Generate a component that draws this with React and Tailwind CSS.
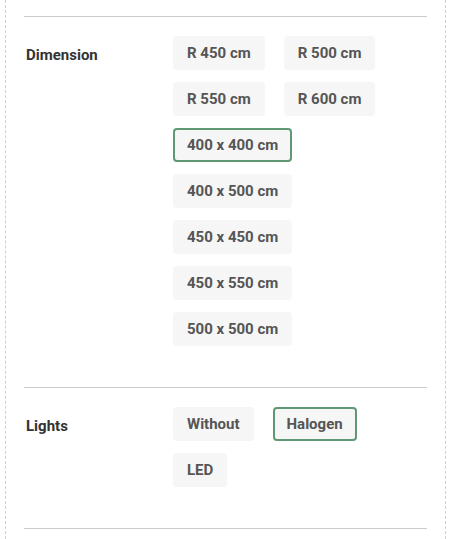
const dimensions = [
  ["R 450 cm", "R 500 cm"],
  ["R 550 cm", "R 600 cm"],
  ["400 x 400 cm"],
  ["400 x 500 cm"],
  ["450 x 450 cm"],
  ["450 x 550 cm"],
  ["500 x 500 cm"],
];

const lights = [["Without", "Halogen"], ["LED"]];

function Option({ label, selected }) {
  return (
    <button
      type="button"
      className={
        "h-[34px] rounded-[4px] bg-[#f6f6f6] text-[15px] font-bold text-[#555] whitespace-nowrap " +
        (selected
          ? "border-2 border-[#5f9872] px-[12px]"
          : "px-[14px]")
      }
    >
      {label}
    </button>
  );
}

function Section({ title, rows, selected }) {
  return (
    <div className="flex border-t border-[#cccccc] pt-[19px] pb-[41px]">
      <div className="w-[149px] shrink-0 pl-[2px] pt-[10px] text-[15px] font-bold text-[#333] leading-[18px]">
        {title}
      </div>
      <div className="flex flex-col gap-[12px]">
        {rows.map((row, i) => (
          <div key={i} className="flex gap-[19px]">
            {row.map((o) => (
              <Option key={o} label={o} selected={o === selected} />
            ))}
          </div>
        ))}
      </div>
    </div>
  );
}

export default function App() {
  return (
    <div
      className="min-h-[539px] bg-white"
      style={{ fontFamily: "Roboto, 'Liberation Sans', sans-serif" }}
    >
      <div className="ml-[5px] w-[441px] min-h-[539px] border-x border-dashed border-[#cfcfcf] px-[18px] pt-[16px]">
        <Section title="Dimension" rows={dimensions} selected="400 x 400 cm" />
        <Section title="Lights" rows={lights} selected="Halogen" />
        <div className="border-t border-[#cccccc]" />
      </div>
    </div>
  );
}
